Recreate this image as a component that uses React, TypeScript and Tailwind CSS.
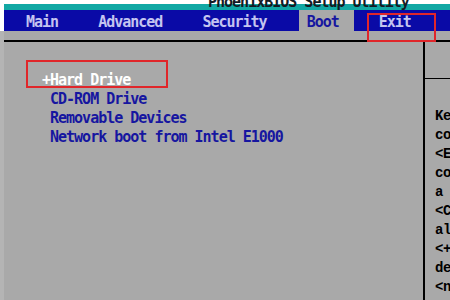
const MONO = "font-['DejaVu_Sans_Mono',monospace] text-[15px] leading-[19px] tracking-[-1px]";

const TABS = ["Main", "Advanced", "Security", "Boot", "Exit"];
const BOOT = ["CD-ROM Drive", "Removable Devices", "Network boot from Intel E1000"];
const HELP = [
  "Keys used to view or",
  "configure devices:",
  "<Enter> expands or",
  "collapses devices with",
  "a + or -",
  "<Ctrl+Enter> expands",
  "all",
  "<+> and <-> moves the",
  "device up or down.",
  "<n> May move removable",
];

export default function App() {
  return (
    <div className="relative flex h-[300px] w-[450px] overflow-hidden bg-[#a9a9a9]">
      {/* left edge strip */}
      <div className="flex w-[4px] shrink-0 flex-col">
        <div className="h-[31px] bg-white" />
        <div className="flex-1 bg-[#b4b4b4]" />
      </div>

      <div className="flex min-w-0 flex-1 flex-col">
        {/* title strip */}
        <div className="h-[10px] border-t-4 border-white bg-[#12a8a4]" />
        <div
          className={`absolute left-[208px] top-[-7px] whitespace-nowrap font-bold text-[#141a24] ${MONO}`}
        >
          PhoenixBIOS Setup Utility
        </div>

        {/* menu bar */}
        <div className={`flex h-[21px] gap-[17px] bg-[#0a0aa6] pl-[14px] font-bold ${MONO}`}>
          {TABS.map((t) => (
            <span
              key={t}
              className={
                t === "Boot"
                  ? "flex items-center bg-[#a9a9a9] pl-[8px] pr-[15px] pt-[3px] text-[#1616a0]"
                  : "flex items-center pl-[8px] pr-[15px] pt-[3px] text-[#c4c4f0]"
              }
            >
              {t}
            </span>
          ))}
        </div>

        <div className="h-[9px]" />

        <div className="flex flex-1 border-t-2 border-black">
          {/* boot order */}
          <div className={`w-[419px] shrink-0 pl-[38px] pt-[29px] font-bold ${MONO}`}>
            <div className="text-white">+Hard Drive</div>
            {BOOT.map((b) => (
              <div key={b} className="pl-[8px] text-[#1616a0]">
                {b}
              </div>
            ))}
          </div>

          {/* help panel */}
          <div className="flex min-w-0 flex-1 flex-col border-l-2 border-black">
            <div className="h-[37px] shrink-0 border-b border-black" />
            <div className="overflow-hidden whitespace-nowrap pl-[10px] pt-[28px] font-['Liberation_Mono',monospace] text-[14px] font-bold leading-[19px] tracking-[-0.4px] text-black">
              {HELP.map((h) => (
                <div key={h}>{h}</div>
              ))}
            </div>
          </div>
        </div>
      </div>

      {/* red annotation boxes */}
      <div className="absolute left-[367px] top-[13px] h-[29px] w-[69px] border-2 border-[#e0262a]" />
      <div className="absolute left-[26px] top-[60px] h-[28px] w-[142px] border-2 border-[#e0262a]" />
    </div>
  );
}
